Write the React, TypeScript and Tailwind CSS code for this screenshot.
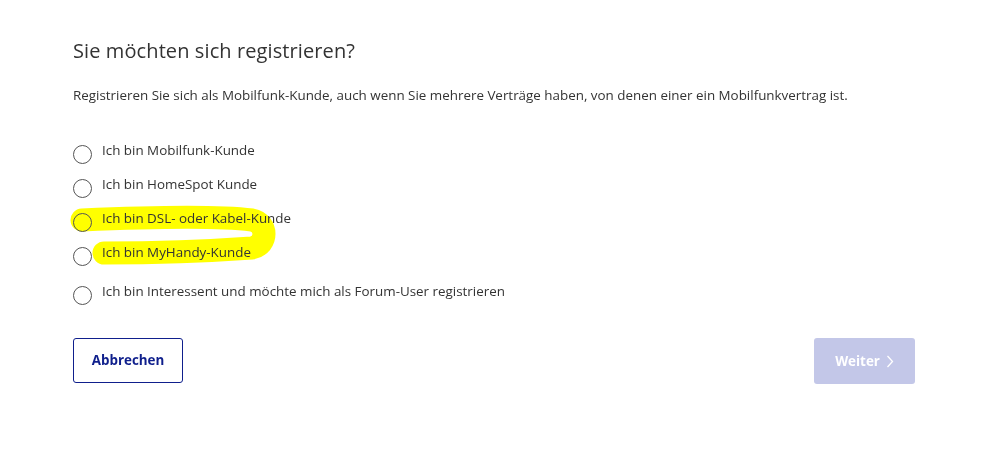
import React from "react";

const options = [
  "Ich bin Mobilfunk-Kunde",
  "Ich bin HomeSpot Kunde",
  "Ich bin DSL- oder Kabel-Kunde",
  "Ich bin MyHandy-Kunde",
  "Ich bin Interessent und möchte mich als Forum-User registrieren",
];

export default function App() {
  return (
    <div
      className="relative w-[985px] h-[450px] bg-white text-[#333333]"
      style={{ fontFamily: '"Open Sans", "Noto Sans", sans-serif' }}
    >
      <div className="pl-[73px] pr-[70px] pt-[37px]">
        <h1 className="text-[20px] leading-[28px] font-normal text-[#333333] tracking-[0.1px]">
          Sie möchten sich registrieren?
        </h1>
        <p className="mt-[20px] text-[13.4px] leading-[20px] text-[#333333]">
          Registrieren Sie sich als Mobilfunk-Kunde, auch wenn Sie mehrere Verträge haben, von denen einer ein Mobilfunkvertrag ist.
        </p>
        <div className="mt-[35px] flex flex-col">
          {options.map((o, i) => (
            <label
              key={o}
              className={`flex items-center gap-[10px] h-[20px] ${i === 0 ? "" : i === 4 ? "mt-[19px]" : "mt-[14px]"}`}
            >
              <span className="relative z-10 w-[19px] h-[19px] rounded-full border border-[#555555] bg-transparent shrink-0 translate-y-[4px]" />
              <span className="relative z-10 text-[13.4px] leading-[20px] text-[#333333]">{o}</span>
            </label>
          ))}
        </div>
        <div className="mt-[37px] flex justify-between pr-0 w-[842px]">
          <button className="w-[110px] h-[45px] border border-[#0f1f8c] rounded-[3px] text-[13.4px] font-bold text-[#0f1f8c] bg-white">
            Abbrechen
          </button>
          <button className="w-[101px] h-[46px] rounded-[3px] bg-[#c3c7e8] text-[13.4px] font-bold text-white flex items-center justify-center gap-[6px]">
            Weiter
            <svg width="8" height="13" viewBox="0 0 8 13" fill="none">
              <path d="M1.5 1 L6.5 6.5 L1.5 12" stroke="white" strokeWidth="1.3" />
            </svg>
          </button>
        </div>
      </div>
      <svg
        className="absolute left-0 top-0 pointer-events-none"
        width="985"
        height="450"
        style={{ mixBlendMode: "multiply" }}
      >
        <path
          d="M 82 220 C 150 217, 220 216, 252 220 C 268 223, 268 245, 252 248 C 210 251, 150 253, 104 253"
          stroke="#ffff00"
          strokeWidth="23"
          strokeLinecap="round"
          strokeLinejoin="round"
          fill="none"
        />
      </svg>
    </div>
  );
}
